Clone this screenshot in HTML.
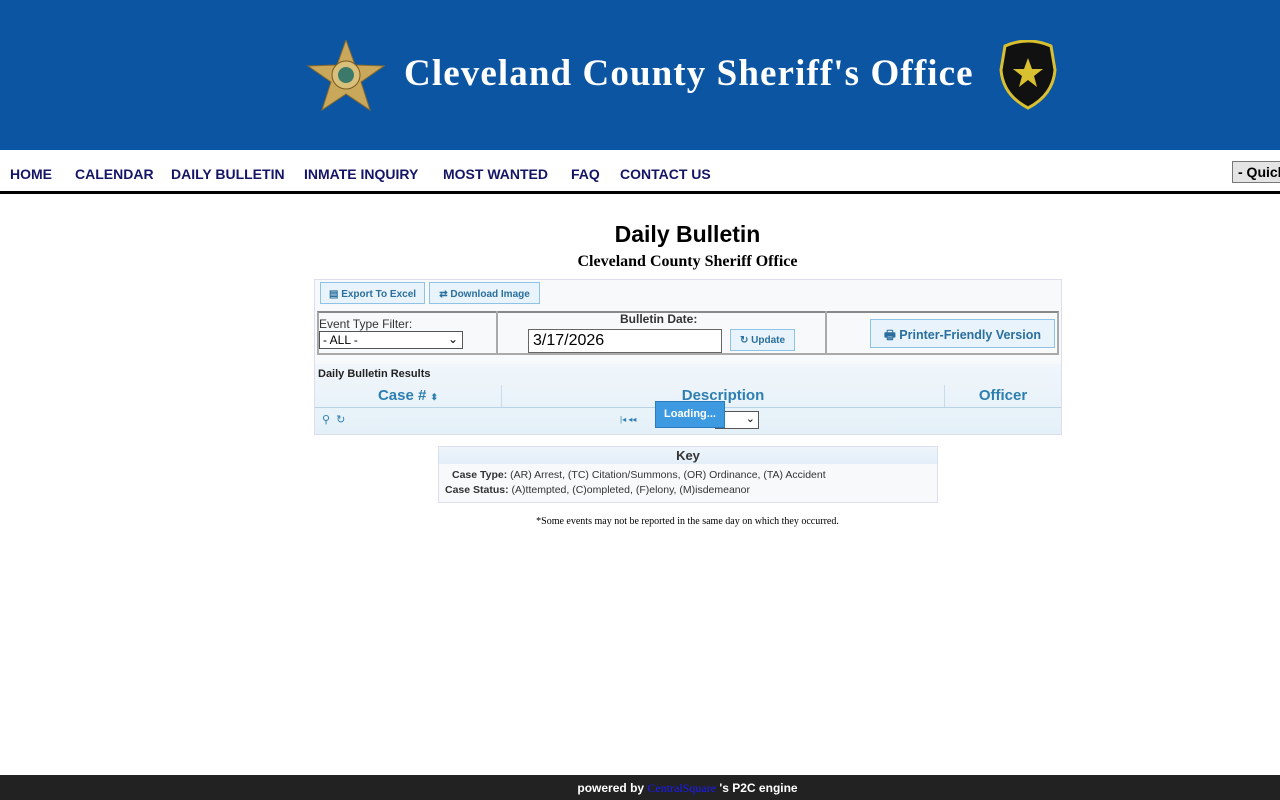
<!DOCTYPE html>
<html><head><meta charset="utf-8"><style>
*{box-sizing:border-box}
body{margin:0;width:1280px;height:800px;position:relative;background:#fff;font-family:"Liberation Sans",sans-serif;overflow:hidden}
.hdr{position:absolute;left:0;top:0;width:1280px;height:150px;background:#0c55a2}
.title{position:absolute;left:404px;top:52px;font-family:"Liberation Serif",serif;font-size:37px;font-weight:bold;color:#fff;letter-spacing:1.1px;white-space:nowrap}
.nav{position:absolute;top:166px;left:10px;font-size:14px;font-weight:bold;color:#151567}
.nav span{position:absolute;white-space:nowrap}
.rule{position:absolute;left:0;top:191px;width:1280px;height:3px;background:#000}
.quick{position:absolute;left:1232px;top:161px;width:60px;height:22px;border:1px solid #777;background:#e4e4e4;font-weight:bold;font-size:14px;padding:2px 0 0 5px}
h1{position:absolute;top:221px;left:0;width:1375px;text-align:center;margin:0;font-size:23px}
.sub{position:absolute;top:253px;left:0;width:1375px;text-align:center;font-family:"Liberation Serif",serif;font-weight:bold;font-size:16px}
.panel{position:absolute;left:314px;top:279px;width:748px;height:156px;border:1px solid #dde;background:#f7f9fb}
.btn{position:absolute;border:1px solid #8fc3e6;background:#e8f3fb;color:#2a6f9e;font-size:10px;font-weight:bold;padding-top:8px;text-align:center}
.ctl{position:absolute;left:317px;top:311px;width:742px;height:44px;border:2px solid #aaa;border-top-color:#888;background:#f7f9fb}
.res{position:absolute;left:315px;top:364px;width:746px;height:70px;background:linear-gradient(#f0f6fb,#e4f0f8)}
.th{position:absolute;top:385px;height:22px;color:#2e7fb1;font-size:15px;font-weight:bold;text-align:center;border-right:1px solid #c9dbe8;padding-top:2px}
.key{position:absolute;left:438px;top:446px;width:500px;height:57px;border:1px solid #dde;background:#f7f9fb;font-size:10.5px;color:#333}
.foot{position:absolute;left:0;top:775px;width:1280px;height:25px;background:#222;color:#fff;font-size:12px;font-weight:bold;text-align:center;padding:6px 0 0 95px}
</style></head><body>
<div class="hdr">
<svg style="position:absolute;left:306px;top:40px" width="80" height="72" viewBox="0 0 80 72"><polygon points="40,0 49,25 78,26 55,42 64,70 40,54 16,70 25,42 2,26 31,25" fill="#c9a85c" stroke="#8a6a2a"/><circle cx="40" cy="35" r="14" fill="#d8bf7a" stroke="#7a5a20"/><circle cx="40" cy="35" r="8" fill="#3b7a6a"/></svg>
<div class="title">Cleveland County Sheriff's Office</div>
<svg style="position:absolute;left:997px;top:40px" width="62" height="70" viewBox="0 0 62 70"><path d="M8 6 Q31 -4 54 6 L58 30 Q56 55 31 68 Q6 55 4 30 Z" fill="#111" stroke="#d8c030" stroke-width="3"/><polygon points="31,18 35,29 46,29 37,36 40,47 31,40 22,47 25,36 16,29 27,29" fill="#d8c030"/></svg>
</div>
<div class="nav"><span style="left:0">HOME</span><span style="left:65px">CALENDAR</span><span style="left:161px">DAILY BULLETIN</span><span style="left:294px">INMATE INQUIRY</span><span style="left:433px">MOST WANTED</span><span style="left:561px">FAQ</span><span style="left:610px">CONTACT US</span></div>
<div class="quick">- Quick</div>
<div class="rule"></div>
<h1>Daily Bulletin</h1>
<div class="sub">Cleveland County Sheriff Office</div>
<div class="panel"></div>
<div class="btn" style="left:320px;top:282px;width:105px;height:22px;padding-top:6px">▤ Export To Excel</div>
<div class="btn" style="left:429px;top:282px;width:111px;height:22px;padding-top:6px">⇄ Download Image</div>
<div class="ctl"></div>
<div style="position:absolute;left:496px;top:311px;width:2px;height:44px;background:#aaa"></div>
<div style="position:absolute;left:825px;top:311px;width:2px;height:44px;background:#aaa"></div>
<div style="position:absolute;left:319px;top:317px;font-size:12px;color:#333">Event Type Filter:</div>
<div style="position:absolute;left:319px;top:331px;width:144px;height:18px;border:1px solid #555;background:#fff;font-size:12px;padding:1px 3px">- ALL -<span style="position:absolute;right:4px;top:0">⌄</span></div>
<div style="position:absolute;left:620px;top:312px;font-size:12px;font-weight:bold;color:#333">Bulletin Date:</div>
<div style="position:absolute;left:528px;top:329px;width:194px;height:24px;border:1px solid #666;background:#fff;font-size:16px;padding:2px 4px">3/17/2026</div>
<div class="btn" style="left:730px;top:329px;width:65px;height:22px;padding-top:5px">↻ Update</div>
<div class="btn" style="left:870px;top:319px;width:185px;height:29px;font-size:12.5px;padding-top:6px">🖶 Printer-Friendly Version</div>
<div class="res"></div>
<div style="position:absolute;left:318px;top:368px;font-size:11px;font-weight:bold;color:#222">Daily Bulletin Results</div>
<div class="th" style="left:315px;width:187px">Case # <span style="font-size:9px">⬍</span></div>
<div class="th" style="left:502px;width:443px">Description</div>
<div class="th" style="left:945px;width:116px;border:none">Officer</div>
<div style="position:absolute;left:315px;top:407px;width:746px;height:1px;background:#b9d3e6"></div>
<div style="position:absolute;left:322px;top:413px;font-size:11px;color:#2e7fb1">⚲ &nbsp;↻</div>
<div style="position:absolute;left:620px;top:415px;font-size:8px;color:#2e7fb1">|◂ ◂◂</div>
<div style="position:absolute;left:715px;top:411px;width:44px;height:18px;border:1px solid #555;background:#fff;font-size:11px;text-align:right;padding-right:3px">⌄</div>
<div style="position:absolute;left:655px;top:401px;width:70px;height:27px;background:#3d9ae0;border:1px solid #2a7cc0;color:#fff;font-size:11px;font-weight:bold;padding:6px 0 0 8px">Loading...</div>
<div class="key"><div style="height:17px;background:linear-gradient(#eef5fb,#e2eef8);text-align:center;font-weight:bold;font-size:13px;color:#333;padding-top:1px">Key</div>
<div style="padding:5px 0 0 13px"><b>Case Type:</b> (AR) Arrest, (TC) Citation/Summons, (OR) Ordinance, (TA) Accident</div>
<div style="padding:3px 0 0 6px"><b>Case Status:</b> (A)ttempted, (C)ompleted, (F)elony, (M)isdemeanor</div></div>
<div style="position:absolute;left:0;top:516px;width:1375px;text-align:center;font-family:'Liberation Serif',serif;font-size:10px">*Some events may not be reported in the same day on which they occurred.</div>
<div class="foot">powered by <span style="color:#1a1aff;font-weight:normal;font-family:'Liberation Serif',serif">CentralSquare</span> 's P2C engine</div>
</body></html>
